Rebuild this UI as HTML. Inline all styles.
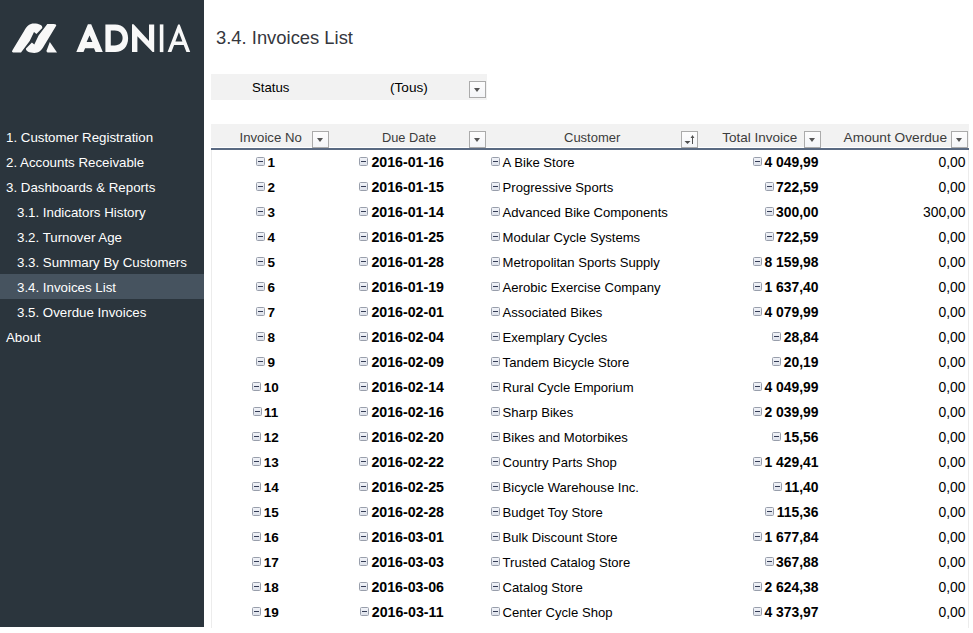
<!DOCTYPE html><html><head><meta charset="utf-8"><style>
html,body{margin:0;padding:0;background:#fff;width:973px;height:633px;overflow:hidden;}
body{position:relative;font-family:"Liberation Sans",sans-serif;}
.t{position:absolute;white-space:nowrap;line-height:20px;}
#side{position:absolute;left:0;top:0;width:204px;height:627px;background:#2b353d;}
.mi{color:#ffffff;}
.hl{position:absolute;left:0;top:274px;width:204px;height:25px;background:#46535f;}
.gray{position:absolute;background:#f2f2f2;}
.dd{position:absolute;width:15px;height:15px;border:1px solid #ababab;background:linear-gradient(#fdfdfd,#f4f5f8);}
.dd i{position:absolute;left:4px;top:6px;width:0;height:0;border-left:3.5px solid transparent;border-right:3.5px solid transparent;border-top:4px solid #555555;}
.hd{color:#3c3c3c;}
.b{font-weight:bold;color:#000;}
.n{color:#000;}
.mn{position:absolute;width:7px;height:7px;border:1px solid #989eab;border-radius:1.5px;background:linear-gradient(#f1f3f8,#dde1ea);}
.mn i,.mi2 i{position:absolute;left:1px;top:3px;width:5px;height:1px;background:#343c55;}
.mi2{display:inline-block;position:relative;width:7px;height:7px;border:1px solid #989eab;border-radius:1.5px;background:linear-gradient(#f1f3f8,#dde1ea);vertical-align:1px;margin-right:2.5px;}
</style></head><body>

<div id="side"><div class="hl"></div></div>
<svg style="position:absolute;left:0;top:0" width="204" height="70" viewBox="0 0 204 70"><g fill="#f8f8f8">
<path d="M 21.00 52.60 L 15.20 52.60 Q 10.60 52.70 12.60 50.00 L 24.23 30.80 C 27.00 25.60 29.60 23.60 34.00 23.60 C 38.90 23.60 42.80 25.30 42.30 28.00 L 36.40 34.10 L 34.00 32.00 L 29.70 41.00 Z"/><path d="M 47.30 23.94 L 53.10 23.94 Q 57.70 23.84 55.70 26.54 L 44.07 45.74 C 41.30 50.94 38.70 52.94 34.30 52.94 C 29.40 52.94 25.50 51.24 26.00 48.54 L 31.90 42.44 L 34.30 44.54 L 38.60 35.54 Z"/><path d="M49.8 42.0 L57.0 52.5 L47.6 52.5 Q46.2 52.3 46.6 50.6 Z"/>
<path d="M76.3 52.1 L87.9 24.2 L91.2 24.2 L102.8 52.1 L95.6 52.1 L94.0 48.2 L85.1 48.2 L83.5 52.1 Z M86.6 41.9 L92.4 41.9 L89.5 35.6 Z" fill-rule="evenodd"/><path d="M105.4 24.4 L115.2 24.4 C123.2 24.4 128.1 30.2 128.1 38.25 C128.1 46.3 123.2 52.1 115.2 52.1 L105.4 52.1 Z M110.8 30.6 L114.8 30.6 C119.5 30.6 122.6 33.6 122.6 38.0 C122.6 42.4 119.5 45.4 114.8 45.4 L110.8 45.4 Z" fill-rule="evenodd"/><path d="M132.0 24.3 L133.6 24.3 L149.0 41.0 L149.0 24.4 L154.2 24.4 L154.2 52.1 L152.6 52.1 L137.4 36.3 L137.4 52.1 L132.0 52.1 Z"/><path d="M159.8 24.4 L163.4 24.4 L163.4 52.1 L159.8 52.1 Z"/><path d="M167.6 52.1 L178.1 24.6 L179.7 24.6 L190.2 52.1 L186.4 52.1 L183.7 45.0 L174.1 45.0 L171.4 52.1 Z M175.4 41.6 L182.4 41.6 L178.9 32.3 Z" fill-rule="evenodd"/>
</g></svg>
<div class="t mi" style="left:6px;top:128.39px;font-size:13.3px;">1. Customer Registration</div>
<div class="t mi" style="left:6px;top:153.39px;font-size:13.3px;">2. Accounts Receivable</div>
<div class="t mi" style="left:6px;top:178.39px;font-size:13.3px;">3. Dashboards &amp; Reports</div>
<div class="t mi" style="left:17px;top:203.39px;font-size:13.3px;">3.1. Indicators History</div>
<div class="t mi" style="left:17px;top:228.39px;font-size:13.3px;">3.2. Turnover Age</div>
<div class="t mi" style="left:17px;top:253.39px;font-size:13.3px;">3.3. Summary By Customers</div>
<div class="t mi" style="left:17px;top:278.39px;font-size:13.3px;">3.4. Invoices List</div>
<div class="t mi" style="left:17px;top:303.39px;font-size:13.3px;">3.5. Overdue Invoices</div>
<div class="t mi" style="left:6px;top:328.39px;font-size:13.3px;">About</div>
<div class="t " style="left:216px;top:27.62px;font-size:18.4px;color:#35373e;">3.4. Invoices List</div>
<div class="gray" style="left:211px;top:74px;width:276px;height:26px;"></div>
<div class="t n" style="left:252px;top:78.43px;font-size:13.2px;">Status</div>
<div class="t n" style="left:390px;top:78.29px;font-size:13.6px;">(Tous)</div>
<div class="dd" style="left:469px;top:81px;"><i></i></div>
<div class="gray" style="left:211px;top:124px;width:758px;height:23px;"></div>
<div style="position:absolute;left:211px;top:148px;width:758px;height:2px;background:#5a6a82;"></div>
<div style="position:absolute;left:211px;top:150px;width:1px;height:478px;background:#ececec;"></div>
<div style="position:absolute;left:968px;top:150px;width:1px;height:478px;background:#ececec;"></div>
<div class="t hd" style="left:239.5px;top:128.43px;font-size:13.2px;">Invoice No</div>
<div class="dd" style="left:312px;top:131px;"><i></i></div>
<div class="t hd" style="left:382px;top:127.56px;font-size:12.8px;">Due Date</div>
<div class="dd" style="left:469px;top:131px;"><i></i></div>
<div class="t hd" style="left:564px;top:127.50px;font-size:13.0px;">Customer</div>
<div class="dd" style="left:681px;top:131px;"><svg style="position:absolute;left:-1px;top:-1px" width="17" height="17"><path d="M3.5 10 L9.5 10 L6.5 13 Z" fill="#505050"/><rect x="11" y="5" width="1" height="8" fill="#505050"/><path d="M9.6 7 L11.5 4 L13.4 7 Z" fill="#505050"/></svg></div>
<div class="t hd" style="left:722.3px;top:128.32px;font-size:13.5px;">Total Invoice</div>
<div class="dd" style="left:804px;top:131px;"><i></i></div>
<div class="t hd" style="left:843.6px;top:128.25px;font-size:13.7px;">Amount Overdue</div>
<div class="dd" style="left:951px;top:131px;"><i></i></div>
<div class="t" style="left:0;width:531.0px;text-align:center;top:153.32px;font-size:13.5px;"><span class="mi2"><i></i></span><span class="b">1</span></div>
<div class="t" style="left:0;width:803.4px;text-align:center;top:152.08px;font-size:14.2px;"><span class="mi2" style="margin-right:3px"><i></i></span><span class="b">2016-01-16</span></div>
<div class="mn" style="left:491px;top:157px;"><i></i></div>
<div class="t n" style="left:502.6px;top:153.06px;font-size:13.1px;">A Bike Store</div>
<div class="t b" style="right:154.5px;top:152.18px;font-size:13.9px;"><span class="mi2"><i></i></span>4 049,99</div>
<div class="t n" style="right:7.5px;top:152.18px;font-size:13.9px;">0,00</div>
<div class="t" style="left:0;width:531.0px;text-align:center;top:178.32px;font-size:13.5px;"><span class="mi2"><i></i></span><span class="b">2</span></div>
<div class="t" style="left:0;width:803.4px;text-align:center;top:177.08px;font-size:14.2px;"><span class="mi2" style="margin-right:3px"><i></i></span><span class="b">2016-01-15</span></div>
<div class="mn" style="left:491px;top:182px;"><i></i></div>
<div class="t n" style="left:502.6px;top:178.06px;font-size:13.1px;">Progressive Sports</div>
<div class="t b" style="right:154.5px;top:177.18px;font-size:13.9px;"><span class="mi2"><i></i></span>722,59</div>
<div class="t n" style="right:7.5px;top:177.18px;font-size:13.9px;">0,00</div>
<div class="t" style="left:0;width:531.0px;text-align:center;top:203.32px;font-size:13.5px;"><span class="mi2"><i></i></span><span class="b">3</span></div>
<div class="t" style="left:0;width:803.4px;text-align:center;top:202.08px;font-size:14.2px;"><span class="mi2" style="margin-right:3px"><i></i></span><span class="b">2016-01-14</span></div>
<div class="mn" style="left:491px;top:207px;"><i></i></div>
<div class="t n" style="left:502.6px;top:203.06px;font-size:13.1px;">Advanced Bike Components</div>
<div class="t b" style="right:154.5px;top:202.18px;font-size:13.9px;"><span class="mi2"><i></i></span>300,00</div>
<div class="t n" style="right:7.5px;top:202.18px;font-size:13.9px;">300,00</div>
<div class="t" style="left:0;width:531.0px;text-align:center;top:228.32px;font-size:13.5px;"><span class="mi2"><i></i></span><span class="b">4</span></div>
<div class="t" style="left:0;width:803.4px;text-align:center;top:227.08px;font-size:14.2px;"><span class="mi2" style="margin-right:3px"><i></i></span><span class="b">2016-01-25</span></div>
<div class="mn" style="left:491px;top:232px;"><i></i></div>
<div class="t n" style="left:502.6px;top:228.06px;font-size:13.1px;">Modular Cycle Systems</div>
<div class="t b" style="right:154.5px;top:227.18px;font-size:13.9px;"><span class="mi2"><i></i></span>722,59</div>
<div class="t n" style="right:7.5px;top:227.18px;font-size:13.9px;">0,00</div>
<div class="t" style="left:0;width:531.0px;text-align:center;top:253.32px;font-size:13.5px;"><span class="mi2"><i></i></span><span class="b">5</span></div>
<div class="t" style="left:0;width:803.4px;text-align:center;top:252.08px;font-size:14.2px;"><span class="mi2" style="margin-right:3px"><i></i></span><span class="b">2016-01-28</span></div>
<div class="mn" style="left:491px;top:257px;"><i></i></div>
<div class="t n" style="left:502.6px;top:253.06px;font-size:13.1px;">Metropolitan Sports Supply</div>
<div class="t b" style="right:154.5px;top:252.18px;font-size:13.9px;"><span class="mi2"><i></i></span>8 159,98</div>
<div class="t n" style="right:7.5px;top:252.18px;font-size:13.9px;">0,00</div>
<div class="t" style="left:0;width:531.0px;text-align:center;top:278.32px;font-size:13.5px;"><span class="mi2"><i></i></span><span class="b">6</span></div>
<div class="t" style="left:0;width:803.4px;text-align:center;top:277.08px;font-size:14.2px;"><span class="mi2" style="margin-right:3px"><i></i></span><span class="b">2016-01-19</span></div>
<div class="mn" style="left:491px;top:282px;"><i></i></div>
<div class="t n" style="left:502.6px;top:278.06px;font-size:13.1px;">Aerobic Exercise Company</div>
<div class="t b" style="right:154.5px;top:277.18px;font-size:13.9px;"><span class="mi2"><i></i></span>1 637,40</div>
<div class="t n" style="right:7.5px;top:277.18px;font-size:13.9px;">0,00</div>
<div class="t" style="left:0;width:531.0px;text-align:center;top:303.32px;font-size:13.5px;"><span class="mi2"><i></i></span><span class="b">7</span></div>
<div class="t" style="left:0;width:803.4px;text-align:center;top:302.08px;font-size:14.2px;"><span class="mi2" style="margin-right:3px"><i></i></span><span class="b">2016-02-01</span></div>
<div class="mn" style="left:491px;top:307px;"><i></i></div>
<div class="t n" style="left:502.6px;top:303.06px;font-size:13.1px;">Associated Bikes</div>
<div class="t b" style="right:154.5px;top:302.18px;font-size:13.9px;"><span class="mi2"><i></i></span>4 079,99</div>
<div class="t n" style="right:7.5px;top:302.18px;font-size:13.9px;">0,00</div>
<div class="t" style="left:0;width:531.0px;text-align:center;top:328.32px;font-size:13.5px;"><span class="mi2"><i></i></span><span class="b">8</span></div>
<div class="t" style="left:0;width:803.4px;text-align:center;top:327.08px;font-size:14.2px;"><span class="mi2" style="margin-right:3px"><i></i></span><span class="b">2016-02-04</span></div>
<div class="mn" style="left:491px;top:332px;"><i></i></div>
<div class="t n" style="left:502.6px;top:328.06px;font-size:13.1px;">Exemplary Cycles</div>
<div class="t b" style="right:154.5px;top:327.18px;font-size:13.9px;"><span class="mi2"><i></i></span>28,84</div>
<div class="t n" style="right:7.5px;top:327.18px;font-size:13.9px;">0,00</div>
<div class="t" style="left:0;width:531.0px;text-align:center;top:353.32px;font-size:13.5px;"><span class="mi2"><i></i></span><span class="b">9</span></div>
<div class="t" style="left:0;width:803.4px;text-align:center;top:352.08px;font-size:14.2px;"><span class="mi2" style="margin-right:3px"><i></i></span><span class="b">2016-02-09</span></div>
<div class="mn" style="left:491px;top:357px;"><i></i></div>
<div class="t n" style="left:502.6px;top:353.06px;font-size:13.1px;">Tandem Bicycle Store</div>
<div class="t b" style="right:154.5px;top:352.18px;font-size:13.9px;"><span class="mi2"><i></i></span>20,19</div>
<div class="t n" style="right:7.5px;top:352.18px;font-size:13.9px;">0,00</div>
<div class="t" style="left:0;width:531.0px;text-align:center;top:378.32px;font-size:13.5px;"><span class="mi2"><i></i></span><span class="b">10</span></div>
<div class="t" style="left:0;width:803.4px;text-align:center;top:377.08px;font-size:14.2px;"><span class="mi2" style="margin-right:3px"><i></i></span><span class="b">2016-02-14</span></div>
<div class="mn" style="left:491px;top:382px;"><i></i></div>
<div class="t n" style="left:502.6px;top:378.06px;font-size:13.1px;">Rural Cycle Emporium</div>
<div class="t b" style="right:154.5px;top:377.18px;font-size:13.9px;"><span class="mi2"><i></i></span>4 049,99</div>
<div class="t n" style="right:7.5px;top:377.18px;font-size:13.9px;">0,00</div>
<div class="t" style="left:0;width:531.0px;text-align:center;top:403.32px;font-size:13.5px;"><span class="mi2"><i></i></span><span class="b">11</span></div>
<div class="t" style="left:0;width:803.4px;text-align:center;top:402.08px;font-size:14.2px;"><span class="mi2" style="margin-right:3px"><i></i></span><span class="b">2016-02-16</span></div>
<div class="mn" style="left:491px;top:407px;"><i></i></div>
<div class="t n" style="left:502.6px;top:403.06px;font-size:13.1px;">Sharp Bikes</div>
<div class="t b" style="right:154.5px;top:402.18px;font-size:13.9px;"><span class="mi2"><i></i></span>2 039,99</div>
<div class="t n" style="right:7.5px;top:402.18px;font-size:13.9px;">0,00</div>
<div class="t" style="left:0;width:531.0px;text-align:center;top:428.32px;font-size:13.5px;"><span class="mi2"><i></i></span><span class="b">12</span></div>
<div class="t" style="left:0;width:803.4px;text-align:center;top:427.08px;font-size:14.2px;"><span class="mi2" style="margin-right:3px"><i></i></span><span class="b">2016-02-20</span></div>
<div class="mn" style="left:491px;top:432px;"><i></i></div>
<div class="t n" style="left:502.6px;top:428.06px;font-size:13.1px;">Bikes and Motorbikes</div>
<div class="t b" style="right:154.5px;top:427.18px;font-size:13.9px;"><span class="mi2"><i></i></span>15,56</div>
<div class="t n" style="right:7.5px;top:427.18px;font-size:13.9px;">0,00</div>
<div class="t" style="left:0;width:531.0px;text-align:center;top:453.32px;font-size:13.5px;"><span class="mi2"><i></i></span><span class="b">13</span></div>
<div class="t" style="left:0;width:803.4px;text-align:center;top:452.08px;font-size:14.2px;"><span class="mi2" style="margin-right:3px"><i></i></span><span class="b">2016-02-22</span></div>
<div class="mn" style="left:491px;top:457px;"><i></i></div>
<div class="t n" style="left:502.6px;top:453.06px;font-size:13.1px;">Country Parts Shop</div>
<div class="t b" style="right:154.5px;top:452.18px;font-size:13.9px;"><span class="mi2"><i></i></span>1 429,41</div>
<div class="t n" style="right:7.5px;top:452.18px;font-size:13.9px;">0,00</div>
<div class="t" style="left:0;width:531.0px;text-align:center;top:478.32px;font-size:13.5px;"><span class="mi2"><i></i></span><span class="b">14</span></div>
<div class="t" style="left:0;width:803.4px;text-align:center;top:477.08px;font-size:14.2px;"><span class="mi2" style="margin-right:3px"><i></i></span><span class="b">2016-02-25</span></div>
<div class="mn" style="left:491px;top:482px;"><i></i></div>
<div class="t n" style="left:502.6px;top:478.06px;font-size:13.1px;">Bicycle Warehouse Inc.</div>
<div class="t b" style="right:154.5px;top:477.18px;font-size:13.9px;"><span class="mi2"><i></i></span>11,40</div>
<div class="t n" style="right:7.5px;top:477.18px;font-size:13.9px;">0,00</div>
<div class="t" style="left:0;width:531.0px;text-align:center;top:503.32px;font-size:13.5px;"><span class="mi2"><i></i></span><span class="b">15</span></div>
<div class="t" style="left:0;width:803.4px;text-align:center;top:502.08px;font-size:14.2px;"><span class="mi2" style="margin-right:3px"><i></i></span><span class="b">2016-02-28</span></div>
<div class="mn" style="left:491px;top:507px;"><i></i></div>
<div class="t n" style="left:502.6px;top:503.06px;font-size:13.1px;">Budget Toy Store</div>
<div class="t b" style="right:154.5px;top:502.18px;font-size:13.9px;"><span class="mi2"><i></i></span>115,36</div>
<div class="t n" style="right:7.5px;top:502.18px;font-size:13.9px;">0,00</div>
<div class="t" style="left:0;width:531.0px;text-align:center;top:528.32px;font-size:13.5px;"><span class="mi2"><i></i></span><span class="b">16</span></div>
<div class="t" style="left:0;width:803.4px;text-align:center;top:527.08px;font-size:14.2px;"><span class="mi2" style="margin-right:3px"><i></i></span><span class="b">2016-03-01</span></div>
<div class="mn" style="left:491px;top:532px;"><i></i></div>
<div class="t n" style="left:502.6px;top:528.06px;font-size:13.1px;">Bulk Discount Store</div>
<div class="t b" style="right:154.5px;top:527.18px;font-size:13.9px;"><span class="mi2"><i></i></span>1 677,84</div>
<div class="t n" style="right:7.5px;top:527.18px;font-size:13.9px;">0,00</div>
<div class="t" style="left:0;width:531.0px;text-align:center;top:553.32px;font-size:13.5px;"><span class="mi2"><i></i></span><span class="b">17</span></div>
<div class="t" style="left:0;width:803.4px;text-align:center;top:552.08px;font-size:14.2px;"><span class="mi2" style="margin-right:3px"><i></i></span><span class="b">2016-03-03</span></div>
<div class="mn" style="left:491px;top:557px;"><i></i></div>
<div class="t n" style="left:502.6px;top:553.06px;font-size:13.1px;">Trusted Catalog Store</div>
<div class="t b" style="right:154.5px;top:552.18px;font-size:13.9px;"><span class="mi2"><i></i></span>367,88</div>
<div class="t n" style="right:7.5px;top:552.18px;font-size:13.9px;">0,00</div>
<div class="t" style="left:0;width:531.0px;text-align:center;top:578.32px;font-size:13.5px;"><span class="mi2"><i></i></span><span class="b">18</span></div>
<div class="t" style="left:0;width:803.4px;text-align:center;top:577.08px;font-size:14.2px;"><span class="mi2" style="margin-right:3px"><i></i></span><span class="b">2016-03-06</span></div>
<div class="mn" style="left:491px;top:582px;"><i></i></div>
<div class="t n" style="left:502.6px;top:578.06px;font-size:13.1px;">Catalog Store</div>
<div class="t b" style="right:154.5px;top:577.18px;font-size:13.9px;"><span class="mi2"><i></i></span>2 624,38</div>
<div class="t n" style="right:7.5px;top:577.18px;font-size:13.9px;">0,00</div>
<div class="t" style="left:0;width:531.0px;text-align:center;top:603.32px;font-size:13.5px;"><span class="mi2"><i></i></span><span class="b">19</span></div>
<div class="t" style="left:0;width:803.4px;text-align:center;top:602.08px;font-size:14.2px;"><span class="mi2" style="margin-right:3px"><i></i></span><span class="b">2016-03-11</span></div>
<div class="mn" style="left:491px;top:607px;"><i></i></div>
<div class="t n" style="left:502.6px;top:603.06px;font-size:13.1px;">Center Cycle Shop</div>
<div class="t b" style="right:154.5px;top:602.18px;font-size:13.9px;"><span class="mi2"><i></i></span>4 373,97</div>
<div class="t n" style="right:7.5px;top:602.18px;font-size:13.9px;">0,00</div>
</body></html>
